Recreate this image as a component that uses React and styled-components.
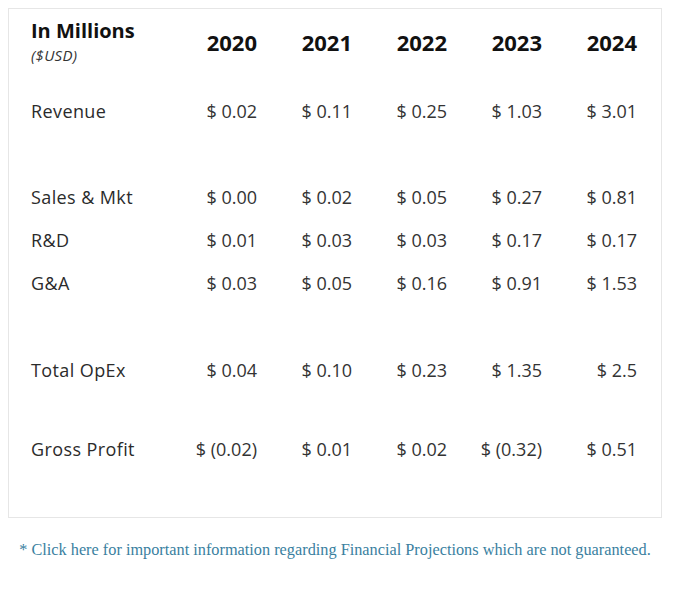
import React from 'react';
import styled, { createGlobalStyle } from "styled-components";

const GlobalStyle = createGlobalStyle`
  body {
    margin: 0;
    background: #fff;
  }
`;

const Page = styled.div`
  width: 679px;
  padding: 8px 0 0 8px;
  box-sizing: border-box;
`;

const Card = styled.div`
  width: 654px;
  height: 510px;
  box-sizing: border-box;
  border: 1px solid #e6e6e6;
  padding: 10px 24px 0 22px;
  font-family: "Open Sans", "Lato", sans-serif;
`;

const Row = styled.div`
  display: grid;
  grid-template-columns: 131px repeat(5, 95px);
  align-items: center;
  height: ${p => p.$h || 43}px;
  margin-top: ${p => p.$gap || 0}px;
`;

const Label = styled.div`
  font-size: 18px;
  color: #2b2b2b;
  white-space: nowrap;
  letter-spacing: 0.4px;
`;

const Value = styled.div`
  font-size: 18px;
  color: #333;
  text-align: right;
  white-space: nowrap;
`;

const Year = styled.div`
  font-size: 22px;
  font-weight: 700;
  color: #111;
  text-align: right;
`;

const Title = styled.div`
  display: flex;
  flex-direction: column;
  gap: 3px;
`;

const TitleMain = styled.span`
  font-size: 20px;
  font-weight: 700;
  color: #111;
  line-height: 24px;
`;

const TitleSub = styled.span`
  font-size: 15px;
  font-style: italic;
  color: #333;
  line-height: 19px;
  letter-spacing: 0.3px;
`;

const Note = styled.a`
  display: block;
  width: 654px;
  margin-top: 22px;
  text-align: center;
  font-family: "Liberation Serif", "Times New Roman", serif;
  font-size: 16.3px;
  color: #3a7f9f;
  text-decoration: none;
  cursor: pointer;
`;

const years = ["2020", "2021", "2022", "2023", "2024"];

const rows = [
  { label: "Revenue", gap: 24, values: ["$ 0.02", "$ 0.11", "$ 0.25", "$ 1.03", "$ 3.01"] },
  { label: "Sales & Mkt", gap: 43, values: ["$ 0.00", "$ 0.02", "$ 0.05", "$ 0.27", "$ 0.81"] },
  { label: "R&D", values: ["$ 0.01", "$ 0.03", "$ 0.03", "$ 0.17", "$ 0.17"] },
  { label: "G&A", values: ["$ 0.03", "$ 0.05", "$ 0.16", "$ 0.91", "$ 1.53"] },
  { label: "Total OpEx", gap: 44, values: ["$ 0.04", "$ 0.10", "$ 0.23", "$ 1.35", "$ 2.5"] },
  { label: "Gross Profit", gap: 36, values: ["$ (0.02)", "$ 0.01", "$ 0.02", "$ (0.32)", "$ 0.51"] },
];

export default function App() {
  return (
    <Page>
      <GlobalStyle />
      <Card>
        <Row $h={46}>
          <Title>
            <TitleMain>In Millions</TitleMain>
            <TitleSub>($USD)</TitleSub>
          </Title>
          {years.map(y => <Year key={y}>{y}</Year>)}
        </Row>
        {rows.map(r => (
          <Row key={r.label} $gap={r.gap}>
            <Label>{r.label}</Label>
            {r.values.map((v, i) => <Value key={i}>{v}</Value>)}
          </Row>
        ))}
      </Card>
      <Note>* Click here for important information regarding Financial Projections which are not guaranteed.</Note>
    </Page>
  );
}
